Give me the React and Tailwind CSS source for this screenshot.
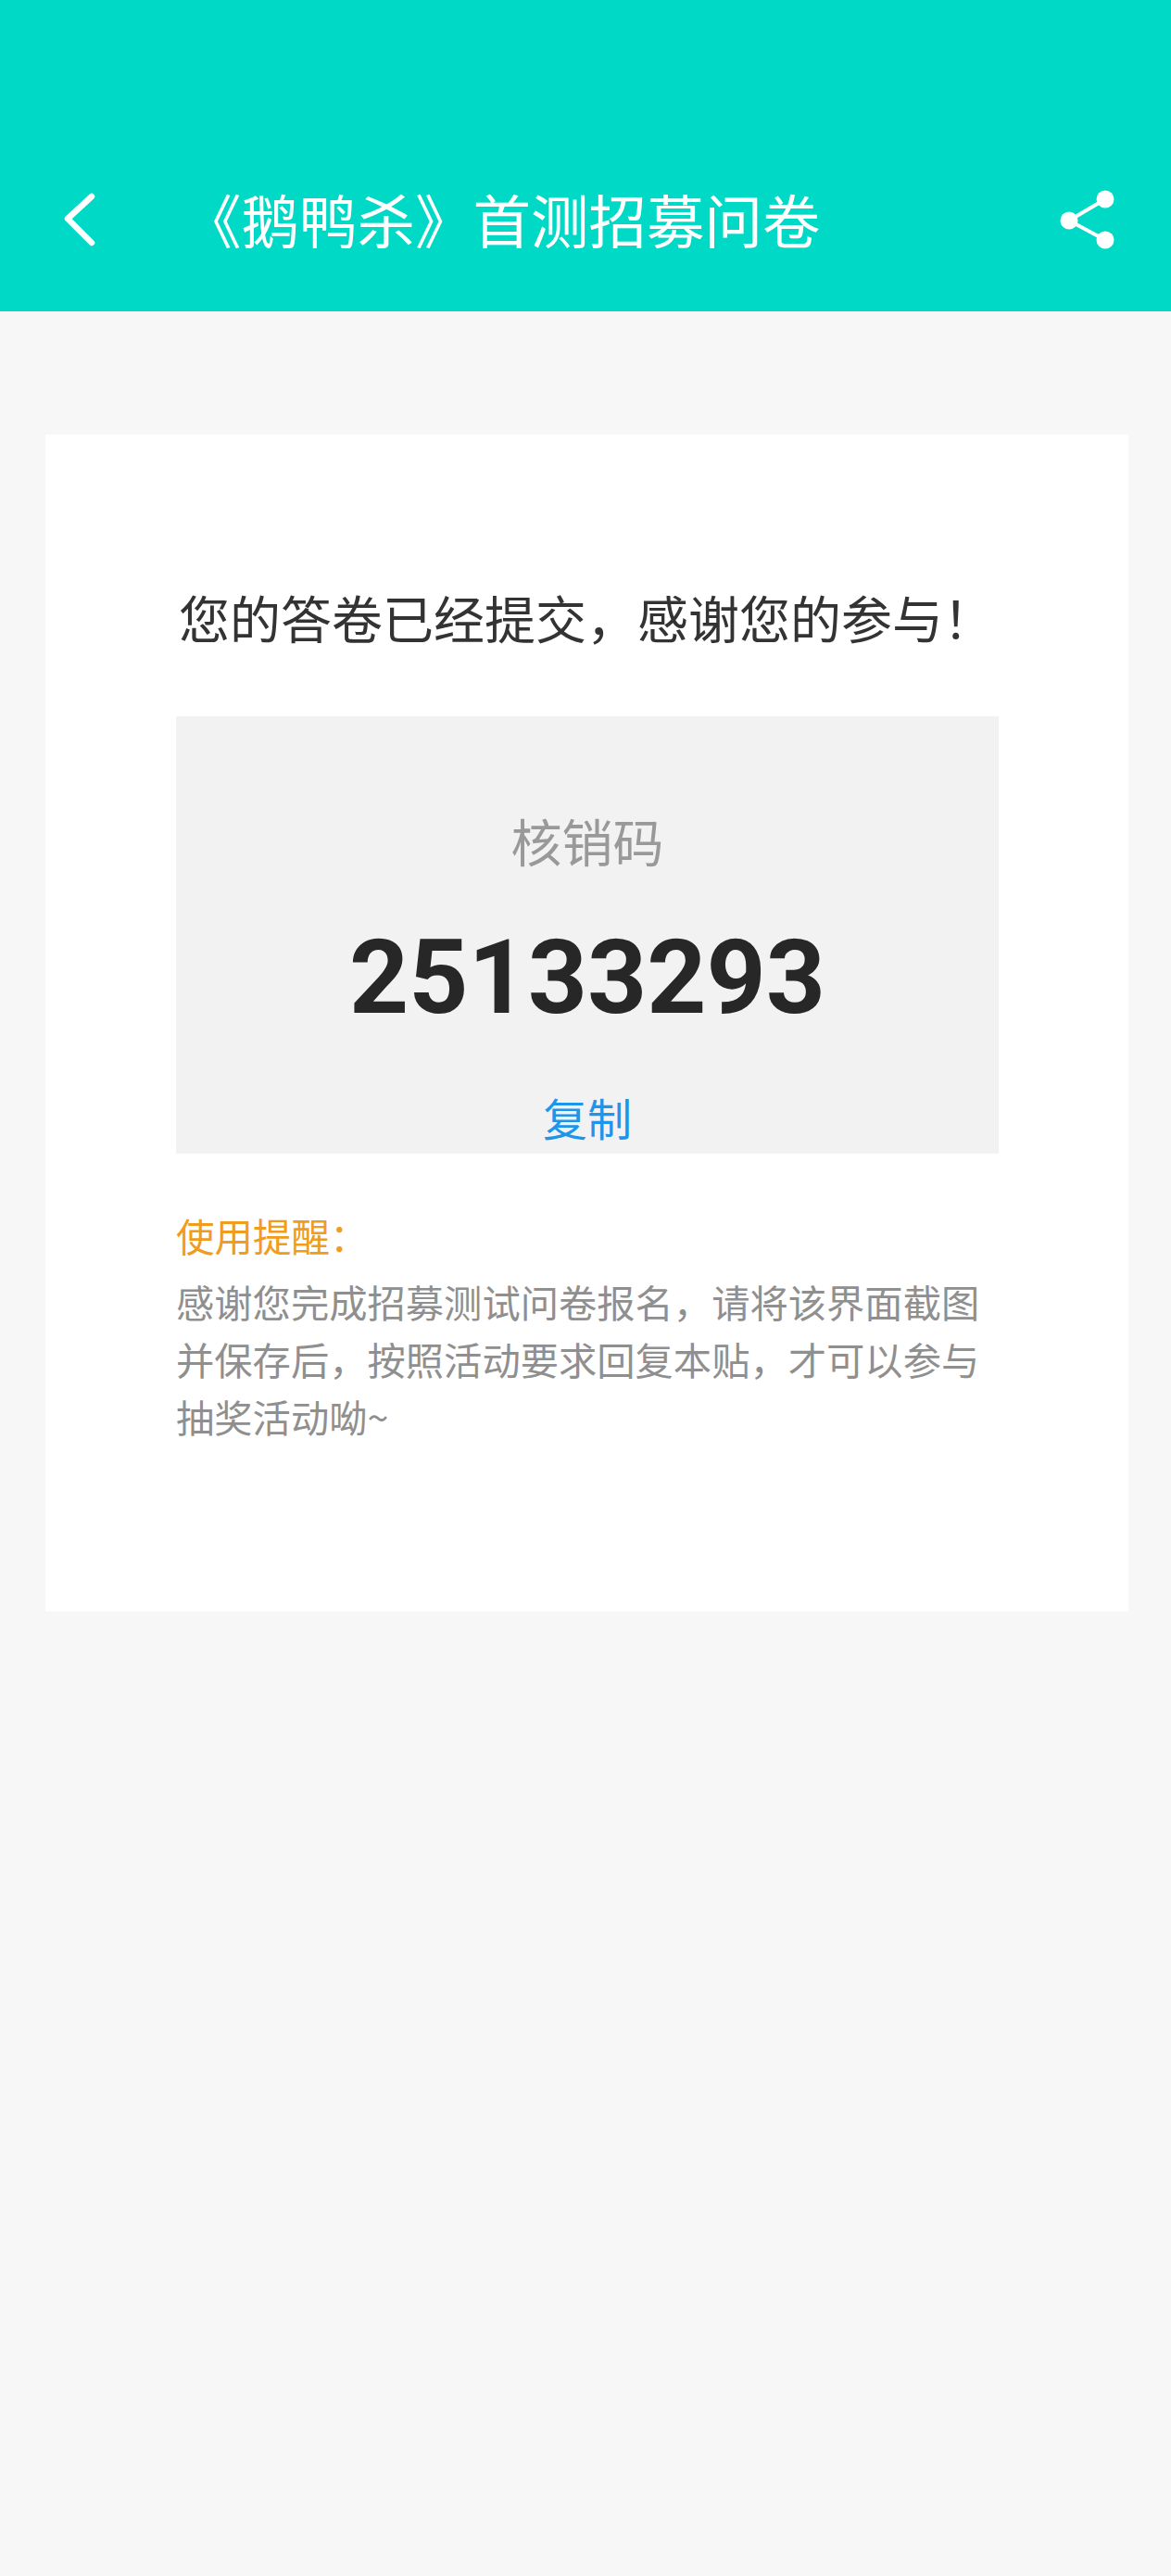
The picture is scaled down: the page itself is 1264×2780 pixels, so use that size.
const FONT = "font-['Noto_Sans_CJK_SC','Noto_Sans',sans-serif]";

function BackIcon() {
  return (
    <svg width="40" height="64" viewBox="0 0 40 64" fill="none" className="shrink-0">
      <path d="M32 7 6 31l26 26" stroke="white" strokeWidth="6.5" strokeLinecap="round" strokeLinejoin="round" />
    </svg>
  );
}

function ShareIcon() {
  return (
    <svg width="60" height="64" viewBox="0 0 60 64" fill="white" className="shrink-0">
      <circle cx="49" cy="10" r="9.5" />
      <circle cx="10" cy="33" r="9.5" />
      <circle cx="49" cy="54" r="9.5" />
      <path d="M49 10 10 33l39 21" fill="none" stroke="white" strokeWidth="4" />
    </svg>
  );
}

export default function App() {
  return (
    <div className={`${FONT} min-h-[2780px] bg-[#f7f7f7]`}>
      <header className="flex h-[336px] items-start bg-[#00d9c5] pt-[205px] text-white">
        <div className="ml-[67px]">
          <BackIcon />
        </div>
        <h1 className="ml-[91px] text-[62.5px] leading-[62px] font-normal">《鹅鸭杀》首测招募问卷</h1>
        <div className="ml-auto mr-[60px]">
          <ShareIcon />
        </div>
      </header>

      <main className="ml-[49px] mr-[46px] mt-[133px] h-[1270px] bg-white pl-[141px] pr-[140px] pt-[156px]">
        <p className="pl-[3px] text-[55px] leading-[80px] whitespace-nowrap text-[#333333]">您的答卷已经提交，感谢您的参与！</p>

        <section className="mt-[68px] flex h-[472px] flex-col items-center bg-[#f2f2f2] pt-[93px]">
          <div className="text-[55px] leading-[80px] text-[#999999]">核销码</div>
          <div className="mt-[44px] font-['Roboto',sans-serif] text-[112px] leading-[130px] font-bold text-[#272727]">25133293</div>
          <button className="mt-[50px] text-[48px] leading-[70px] text-[#1c96ea]">复制</button>
        </section>

        <div className="mt-[57px] text-[41.5px] leading-[62px] text-[#f09c1e]">使用提醒：</div>
        <p className="mt-[9px] text-[41.3px] leading-[62px] text-[#8f8f8f]">
          感谢您完成招募测试问卷报名，请将该界面截图并保存后，按照活动要求回复本贴，才可以参与抽奖活动呦~
        </p>
      </main>
    </div>
  );
}
